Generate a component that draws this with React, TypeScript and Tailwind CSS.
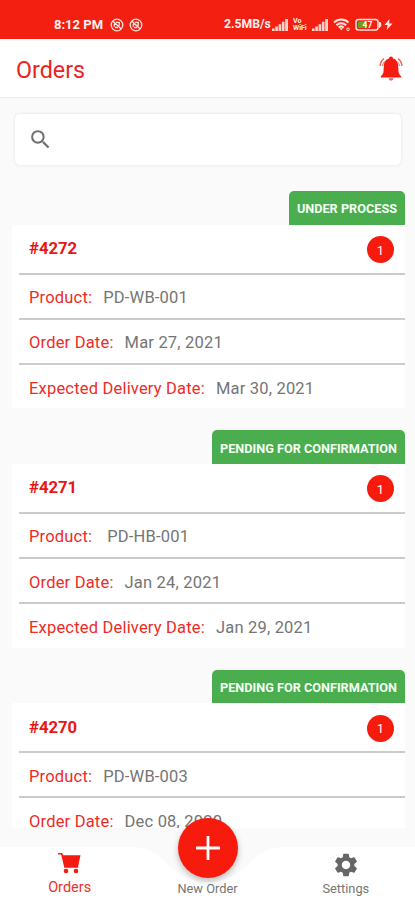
import { MdSearch, MdSettings } from "react-icons/md";

// TYPES
type Order = {
    id: string;
    status: string;
    product: string;
    orderDate: string;
    deliveryDate?: string;
    productGap?: string;
};

const orders: Order[] = [
    {
        id: "#4272",
        status: "UNDER PROCESS",
        product: "PD-WB-001",
        orderDate: "Mar 27, 2021",
        deliveryDate: "Mar 30, 2021",
    },
    {
        id: "#4271",
        status: "PENDING FOR CONFIRMATION",
        product: "PD-HB-001",
        orderDate: "Jan 24, 2021",
        deliveryDate: "Jan 29, 2021",
        productGap: "ml-[15px]",
    },
    {
        id: "#4270",
        status: "PENDING FOR CONFIRMATION",
        product: "PD-WB-003",
        orderDate: "Dec 08, 2020",
    },
];

// ICONS
const MutedIcon = () => (
    <svg width="14" height="14" viewBox="0 0 14 14" fill="none" stroke="#ffe3df">
        <circle cx="7" cy="7" r="5.8" strokeWidth="1.3" />
        <path d="M3 3.2 11 10.8M4.3 8.8V7c0-1 .5-1.6 1.2-2M6 4.4h3.2v3.3M5 9.5h3" strokeWidth="1.4" />
    </svg>
);

const SignalIcon = () => (
    <svg width="17" height="12" viewBox="0 0 17 12" fill="#ffd2cc">
        <path d="M0 9.5h2.6V12H0zM3.3 7.5h2.6V12H3.3zM6.6 5.2h2.6V12H6.6zM9.9 2.8h2.6V12H9.9zM13.2 0H16v12h-2.8z" />
    </svg>
);

const WifiIcon = () => (
    <svg width="18" height="14" viewBox="0 0 18 14" fill="none" stroke="#ffe3df" strokeWidth="2">
        <path d="M1 4.6c4-4 10.5-4 14.5 0M3.4 7.2c2.7-2.7 7-2.7 9.7 0M5.7 9.6c1.5-1.4 3.7-1.4 5.1 0" />
        <path d="M6.5 10.3h3.6l-1.8 2.2z" fill="#ffe3df" stroke="none" />
        <circle cx="15" cy="11.3" r="1.3" strokeWidth="1" />
    </svg>
);

const BatteryIcon = () => (
    <svg width="27" height="14" viewBox="0 0 27 14">
        <rect x="1" y="1.5" width="22" height="10.5" rx="2.5" fill="none" stroke="#ffe3df" strokeWidth="1.5" />
        <path d="M24.5 4c1.8.5 1.8 5 0 5.5z" fill="#ffe3df" stroke="#ffe3df" />
        <rect x="3" y="3.5" width="8.5" height="6.5" rx="1" fill="#69a51b" />
        <text x="12.5" y="9.8" fontSize="8.5" fontWeight="700" textAnchor="middle" fill="#fff">
            47
        </text>
    </svg>
);

const BoltIcon = () => (
    <svg width="9" height="11" viewBox="0 0 9 11" fill="#ffe3df">
        <path d="M5.5 0 .5 6h3L2.7 11 8.5 4.6H5.2z" />
    </svg>
);

const BellIcon = () => (
    <svg width="24" height="26" viewBox="0 0 24 26" fill="#f41c10">
        <path d="M10 2.4a2 2 0 0 1 4 0c3.5.9 5 3.7 5.2 7.5l.3 5.6c.2 2.2 1 3.2 2.7 4.7v1.3H1.8v-1.3c1.7-1.5 2.5-2.5 2.7-4.7l.3-5.6C5 6.1 6.5 3.3 10 2.4z" />
        <path d="M9.6 22.3h4.8a2.4 2.4 0 0 1-4.8 0z" fill="#f0655c" />
        <path d="M5 2.7C2.6 4.4 1.4 6.7 1 10M19 2.7c2.4 1.7 3.6 4 4 7.3" fill="none" stroke="#f0655c" strokeWidth="1.5" />
        <path d="M6 5.3C4.5 6.6 3.8 8.2 3.5 10M18 5.3c1.5 1.3 2.2 2.9 2.5 4.7" fill="none" stroke="#f0655c" />
    </svg>
);

const CartIcon = () => (
    <svg width="23" height="22" viewBox="0 0 23 22" fill="#f41c10">
        <path d="M0 1h4.2l1 2.3h17.3l-2.3 10.7v1.8H6.3L3.2 2.5H0z" />
        <circle cx="8" cy="19" r="2.3" />
        <circle cx="18" cy="19" r="2.3" />
    </svg>
);

const StatusBar = () => (
    <div className="flex h-[39px] shrink-0 items-center bg-[#f31f10] pt-[10px] pl-[54px] text-[#fff1ef]">
        <p className="w-[56px] text-[13px] font-bold whitespace-nowrap">8:12 PM</p>
        <div className="flex gap-[5px]">
            <MutedIcon />
            <MutedIcon />
        </div>
        <p className="ml-[81px] w-[48px] text-[12.2px] font-bold whitespace-nowrap">2.5MB/s</p>
        <SignalIcon />
        <div className="mr-[3px] ml-[4px] w-[16px] text-[7px] leading-[7px] font-bold">
            <p>Vo</p>
            <p>WiFi</p>
        </div>
        <SignalIcon />
        <div className="ml-[4px] flex items-center">
            <WifiIcon />
            <div className="ml-[4px]">
                <BatteryIcon />
            </div>
            <div className="ml-[2px]">
                <BoltIcon />
            </div>
        </div>
    </div>
);

type RowProps = { label: string; value: string; gap?: string };

const Row = ({ label, value, gap = "ml-[11px]" }: RowProps) => (
    <div className="ml-[7px] flex h-[45.3px] items-center border-t-2 border-[#cbcbcb] pt-[2.6px] pl-[10px] text-[16.5px] leading-[15px] tracking-[0.19px] whitespace-nowrap">
        <p className="text-[#ee2b27]">{label}</p>
        <p className={`${gap} text-[#757575]`}>{value}</p>
    </div>
);

const OrderCard = ({ order }: { order: Order }) => (
    <div className="flex shrink-0 flex-col">
        <div className="mr-[10px] flex h-[33.5px] items-center self-end rounded-t-[5px] bg-[#4aae4f] px-[8px] pt-[2px] text-[12.7px] font-bold whitespace-nowrap text-[#f4fff4]">
            {order.status}
        </div>
        <div className="mr-[10px] ml-[12px] bg-white">
            <div className="flex h-[48px] items-center justify-between pr-[11px] pl-[17px]">
                <p className="text-[16.7px] font-bold text-[#e91513]">{order.id}</p>
                <div className="mt-[2px] flex h-[27px] w-[27px] items-center justify-center rounded-full bg-[#f71b0d] pt-[2px] text-[13px] text-white">
                    1
                </div>
            </div>
            <Row label="Product:" value={order.product} gap={order.productGap} />
            <Row label="Order Date:" value={order.orderDate} />
            {order.deliveryDate && (
                <Row label="Expected Delivery Date:" value={order.deliveryDate} />
            )}
        </div>
    </div>
);

const BottomNav = () => (
    <div className="relative h-[72px] shrink-0 bg-[#fafafa]">
        {/* bar with a cradle for the round button */}
        <svg className="absolute inset-0" width="415" height="72" viewBox="0 0 415 72" fill="#fff">
            <path d="M0 19H130C154 19 160 30 174 42C192 58 224 58 242 42C256 30 262 19 286 19H415V72H0z" />
        </svg>
        <div className="relative grid h-full grid-cols-3 text-center text-[12.8px] text-[#757575]">
            <div className="flex flex-col items-center pt-[24px] pl-[1px] text-[14.5px] text-[#ef3028]">
                <CartIcon />
                <p className="mt-[4px] leading-[20px]">Orders</p>
            </div>
            <p className="pt-[51px] leading-[20px]">New Order</p>
            <div className="flex flex-col items-center pt-[23px]">
                <MdSettings size={28} color="#666" />
                <p className="leading-[20px]">Settings</p>
            </div>
        </div>
        <button className="absolute top-[-10px] left-[178px] flex h-[60px] w-[60px] items-center justify-center rounded-full bg-[#f71b0d] shadow-[0_3px_6px_rgba(0,0,0,0.25)]">
            <svg width="24" height="24" viewBox="0 0 24 24" stroke="#fff" strokeWidth="2.8">
                <path d="M12 0v24M0 12h24" />
            </svg>
        </button>
    </div>
);

const App = () => {
    return (
        <div className="flex h-[900px] w-[415px] flex-col overflow-hidden bg-[#fafafa] font-['Roboto',sans-serif]">
            <StatusBar />
            <div className="flex h-[58px] shrink-0 items-center justify-between bg-white pr-[12px] pl-[16px] shadow-[0_1px_1px_#ececec]">
                <h1 className="mt-[5px] text-[23.3px] text-[#ea2420]">Orders</h1>
                <div className="mt-[2px]">
                    <BellIcon />
                </div>
            </div>
            <div className="mt-[17px] mr-[14px] ml-[15px] flex h-[51px] shrink-0 items-center rounded-[5px] bg-white pl-[13px] shadow-[0_0_2px_1px_#ededed]">
                <MdSearch size={25} color="#707070" />
            </div>
            <div className="mt-[26px] flex min-h-0 flex-1 flex-col gap-[21.9px] overflow-hidden">
                {orders.map((order) => (
                    <OrderCard key={order.id} order={order} />
                ))}
            </div>
            <BottomNav />
        </div>
    );
};

export default App;
